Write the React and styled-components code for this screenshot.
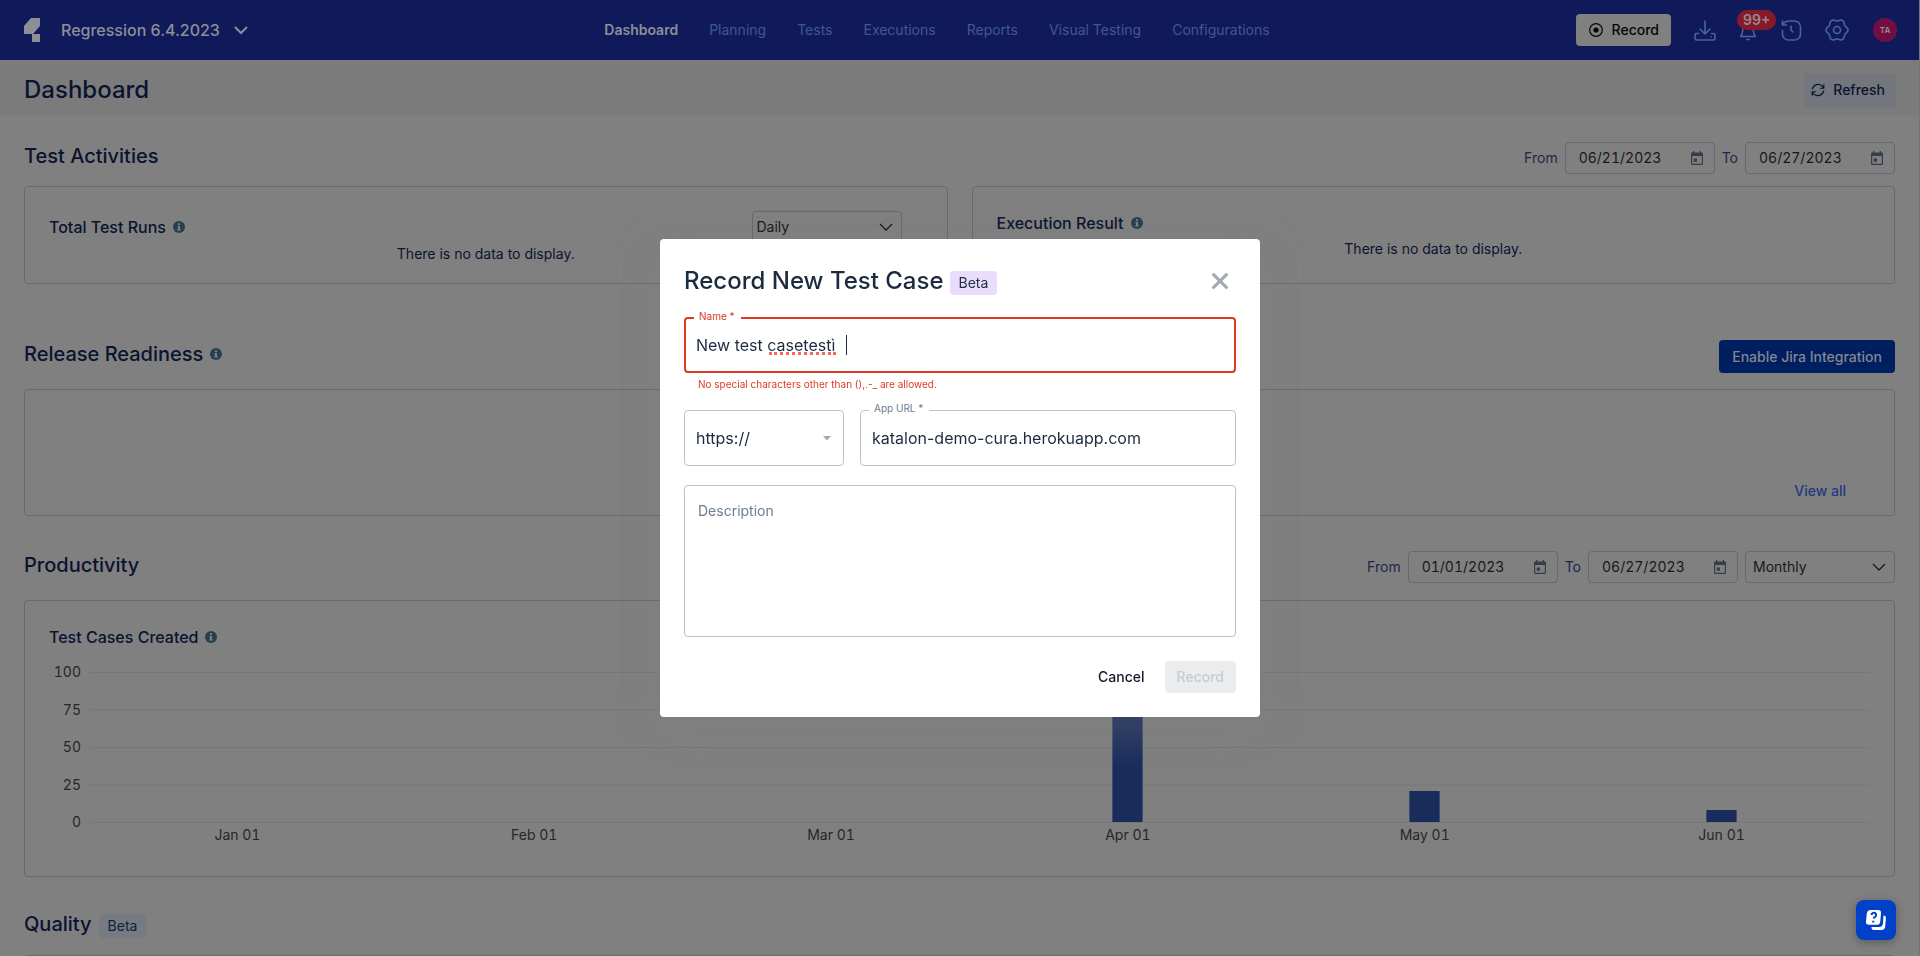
import React from "react";
import styled, { createGlobalStyle, css } from "styled-components";

const Global = createGlobalStyle`
  *, *::before, *::after { box-sizing: border-box; }
  html, body { margin: 0; height: 100%; }
  body {
    overflow: hidden;
    background: #808080;
    font-family: Inter, "Liberation Sans", sans-serif;
    font-size: 14px;
    line-height: 20px;
    color: #0a1330;
  }
  button, input, select, textarea { font: inherit; color: inherit; margin: 0; }
  h1, h2, h3, p { margin: 0; font-weight: 500; }
`;

const Page = styled.div`
  height: 100vh;
  overflow: hidden;
  border-right: 1px solid #72757a;
`;

const TopBar = styled.header`
  display: grid;
  grid-template-columns: 1fr auto 1fr;
  align-items: center;
  height: 60px;
  padding: 0 23px 0 24px;
  margin-right: -1px;
  background: #101a5b;
`;

const Project = styled.button`
  display: flex;
  align-items: center;
  justify-self: start;
  padding: 0;
  border: 0;
  background: none;
  color: #8e8f96;
  font-size: 16px;
  font-weight: 500;
`;

const ProjectName = styled.span`
  margin: 0 14px 0 20px;
`;

const Nav = styled.nav`
  display: flex;
  gap: 31px;
  margin-right: 47px;
`;

const NavLink = styled.a`
  color: ${(p) => (p.$active ? "#8e8f96" : "#40588a")};
  font-weight: ${(p) => (p.$active ? 600 : 400)};
  text-decoration: none;
`;

const Tools = styled.div`
  display: flex;
  align-items: center;
  justify-self: end;
  gap: 20px;
`;

const RecordButton = styled.button`
  display: flex;
  align-items: center;
  gap: 8px;
  height: 32px;
  margin-right: 2px;
  padding: 0 12px;
  border: 0;
  border-radius: 4px;
  background: #808080;
  color: #05060b;
  font-weight: 500;
`;

const IconButton = styled.button`
  position: relative;
  display: flex;
  padding: 0;
  border: 0;
  background: none;
  color: #47649c;
`;

const Count = styled.span`
  position: absolute;
  left: 0;
  top: -8px;
  padding: 0 6px;
  border-radius: 10px;
  background: #861a2b;
  color: #96898c;
  font-weight: 600;
`;

const Avatar = styled.span`
  display: grid;
  place-items: center;
  width: 24px;
  height: 24px;
  margin-left: 4px;
  border-radius: 50%;
  background: #720f42;
  color: #a08c98;
  font-size: 8px;
  font-weight: 600;
`;

const TitleBar = styled.div`
  display: flex;
  align-items: center;
  justify-content: space-between;
  height: 56px;
  padding: 4px 23px 0 24px;
  background: #7b7b7b;
`;

const PageTitle = styled.h1`
  font-size: 24px;
  line-height: 32px;
`;

const RefreshButton = styled.button`
  display: flex;
  align-items: center;
  gap: 8px;
  height: 35px;
  padding: 0 11px 0 7px;
  border: 0;
  border-radius: 4px;
  background: #74767d;
  font-weight: 500;
`;

const Main = styled.main`
  padding: 26px 24px 0;
`;

const SectionHead = styled.div`
  display: flex;
  align-items: flex-start;
  justify-content: space-between;
  height: 32px;
  margin: ${(p) => p.$top || 0}px 0 ${(p) => p.$bottom}px;
`;

const SectionTitle = styled.h2`
  display: flex;
  align-items: center;
  gap: 7px;
  height: 28px;
  font-size: 20px;
  line-height: 28px;
`;

const CardTitle = styled.h3`
  display: flex;
  align-items: center;
  gap: 7px;
  font-size: 16px;
  line-height: 24px;
`;

const Filters = styled.div`
  display: flex;
  align-items: center;
  gap: 7px;
  color: #1c2848;
`;

const FieldLabel = styled.label`
  display: flex;
  align-items: center;
  gap: 7px;
`;

const boxed = css`
  border: 1px solid #67696e;
  border-radius: 4px;
`;

const DateBox = styled.span`
  ${boxed}
  display: flex;
  align-items: center;
  justify-content: space-between;
  width: 150px;
  height: 32px;
  padding: 0 10px 0 13px;
  color: #16181c;
`;

const DateInput = styled.input`
  width: 100px;
  padding: 0;
  border: 0;
  background: none;
  outline: none;
  font-variant-numeric: tabular-nums;
`;

const SelectWrap = styled.span`
  ${boxed}
  display: flex;
  align-items: center;
  width: 150px;
  height: 32px;
  padding-right: 8px;
  color: #16181c;
`;

const Select = styled.select`
  flex: 1;
  min-width: 0;
  height: 100%;
  padding: 0 0 0 ${(p) => p.$inset}px;
  border: 0;
  background: none;
  outline: none;
  appearance: none;
`;

const Card = styled.section`
  ${boxed}
  flex: 1;
  min-height: ${(p) => p.$height}px;
  padding: 24px 24px 12px;
`;

const CardRow = styled.div`
  display: flex;
  gap: 24px;
`;

const CardHead = styled.div`
  display: flex;
  align-items: center;
  justify-content: space-between;
  height: ${(p) => p.$height}px;
  margin-bottom: ${(p) => p.$gap}px;
  padding-right: 21px;
`;

const Empty = styled.p`
  font-weight: 400;
  text-align: center;
`;

const PrimaryButton = styled.button`
  height: 33px;
  padding: 0 13px;
  border: 0;
  border-radius: 4px;
  background: #001f60;
  color: #84878d;
  font-weight: 500;
`;

const LinkRow = styled.div`
  display: flex;
  justify-content: flex-end;
  padding: 67px 24px 0;
`;

const TextLink = styled.a`
  color: #1f3a82;
  font-weight: 500;
  text-decoration: none;
`;

const Chart = styled.div`
  display: grid;
  grid-template-columns: 32px 1fr;
  grid-template-rows: 163px 20px;
  column-gap: 8px;
  margin-top: 13px;
  color: #262628;
  font-variant-numeric: tabular-nums;
`;

const Ticks = styled.div`
  display: flex;
  flex-direction: column;
  justify-content: space-between;
  height: 170px;
  text-align: right;
`;

const Plot = styled.div`
  display: grid;
  grid-template-columns: repeat(6, 1fr);
  align-items: end;
  justify-items: center;
  height: 151px;
  margin-top: 10px;
  border-bottom: 1px solid #777777;
  background: linear-gradient(to bottom, #777777 1px, transparent 1px) 0 0 / 100% 25%;
`;

const Bar = styled.div`
  width: 31px;
  border: solid #3d4c70;
  border-width: 0 1px;
  background: #192c5c;
`;

const Months = styled.div`
  grid-column: 2;
  display: grid;
  grid-template-columns: repeat(6, 1fr);
  text-align: center;
`;

const Tag = styled.span`
  margin-top: 4px;
  padding: 2px 9px;
  border-radius: 4px;
  background: ${(p) => (p.$violet ? "#eadcfd" : "#767b83")};
  color: ${(p) => (p.$violet ? "#233145" : "#101c3c")};
  font-size: 14px;
  font-weight: 400;
  line-height: 20px;
`;

const Overlay = styled.div`
  position: fixed;
  inset: 0;
  display: grid;
  place-items: center;
`;

const Dialog = styled.form`
  width: 600px;
  padding: 24px;
  border-radius: 4px;
  background: #ffffff;
  box-shadow: 0 24px 38px 3px rgba(130, 130, 130, 0.2), 0 9px 46px 8px rgba(130, 130, 130, 0.14);
  color: #1d2b3e;
`;

const DialogHead = styled.div`
  display: flex;
  align-items: center;
  justify-content: space-between;
  height: 36px;
  padding-right: 5px;
`;

const DialogTitle = styled.h2`
  display: flex;
  align-items: center;
  gap: 6px;
  font-size: 24px;
  line-height: 36px;
`;

const CloseButton = styled.button`
  display: flex;
  padding: 0;
  border: 0;
  background: none;
  color: #a5a8b5;
`;

const Field = styled.div`
  position: relative;
  display: flex;
  align-items: center;
  flex: ${(p) => p.$flex || "initial"};
  height: 56px;
  margin-top: ${(p) => p.$top || 0}px;
  padding: 0 ${(p) => (p.$error ? 10 : 11)}px;
  border: ${(p) => (p.$error ? "2px solid #dc3a24" : "1px solid #c2c3c6")};
  border-radius: 4px;
`;

const FloatingLabel = styled.label`
  position: absolute;
  top: -9px;
  left: 8px;
  padding: 0 6px 0 5px;
  background: #ffffff;
  color: ${(p) => (p.$error ? "#dc3a24" : "#6d7d8f")};
  font-size: 10px;
  line-height: 12px;
`;

const SpellingMark = styled.span`
  position: absolute;
  left: 83px;
  top: 33px;
  width: 67px;
  border-bottom: 3px dotted #ff6258;
`;

const Caret = styled.span`
  position: absolute;
  left: 160px;
  top: 16px;
  width: 1px;
  height: 20px;
  background: #1d2b3e;
`;

const TextInput = styled.input`
  flex: 1;
  min-width: 0;
  padding: 0;
  border: 0;
  outline: none;
  background: none;
  font-size: 16px;
  line-height: 24px;
`;

const ProtocolSelect = styled(Select)`
  font-size: 16px;
`;

const ErrorText = styled.p`
  margin: 5px 14px 0;
  color: #dc3a24;
  font-size: 10px;
  font-weight: 400;
  line-height: 12px;
`;

const UrlRow = styled.div`
  display: flex;
  gap: 16px;
  margin-top: 20px;
`;

const Description = styled.textarea`
  display: block;
  width: 100%;
  height: 152px;
  margin-top: 19px;
  padding: 15px 13px;
  border: 1px solid #c2c3c6;
  border-radius: 4px;
  outline: none;
  resize: none;
  &::placeholder { color: #6d7d8f; opacity: 1; }
`;

const Actions = styled.div`
  display: flex;
  justify-content: flex-end;
  gap: 8px;
  margin-top: 24px;
`;

const DialogButton = styled.button`
  height: 32px;
  padding: 0 12px;
  border: 0;
  border-radius: 4px;
  background: ${(p) => (p.disabled ? "#ebecee" : "none")};
  color: ${(p) => (p.disabled ? "#c7cad0" : "#14182c")};
  font-weight: 500;
`;

const HelpButton = styled.button`
  position: fixed;
  right: 24px;
  bottom: 16px;
  display: grid;
  place-items: center;
  width: 40px;
  height: 40px;
  padding: 0;
  border: 0;
  border-radius: 8px;
  background: #0041c8;
  box-shadow: 0 2px 10px rgba(0, 0, 0, 0.3);
`;

const Stroke = ({ size = 24, width = 2, children }) => (
  <svg width={size} height={size} viewBox="0 0 24 24" fill="none" stroke="currentColor" strokeWidth={width} strokeLinecap="round" strokeLinejoin="round" aria-hidden="true">
    {children}
  </svg>
);

const Logo = () => (
  <svg width="17" height="24" viewBox="0 0 17 24" fill="#8e8f96" aria-hidden="true">
    <path d="M7 0h9v8L9 16H0V8z" />
    <path d="M8 16h8v8H8z" />
  </svg>
);

const Chevron = ({ size = 14, width = 2 }) => (
  <svg width={size} height={size} viewBox="0 0 14 14" fill="none" stroke="currentColor" strokeWidth={width} aria-hidden="true">
    <path d="M1 4l6 6 6-6" />
  </svg>
);

const Info = () => (
  <svg width="12" height="12" viewBox="0 0 12 12" aria-hidden="true">
    <circle cx="6" cy="6" r="6" fill="#26404f" />
    <path d="M5 2.300h2v1.700H5zM4.500 5H7v3.300h.7v1.200H4.300V8.300H5V6.200h-.5z" fill="#808080" />
  </svg>
);

const Calendar = () => (
  <svg width="14" height="16" viewBox="0 0 14 16" fill="#353e4a" aria-hidden="true">
    <path fillRule="evenodd" d="M3 1h1.300v1.500h5.400V1H11v1.500h.7A1.300 1.300 0 0 1 13 3.800v9.900a1.300 1.300 0 0 1-1.300 1.300H2.300A1.300 1.300 0 0 1 1 13.700V3.800a1.300 1.300 0 0 1 1.300-1.300H3zM2.200 6v7.700h9.600V6z" />
    <path d="M3.700 8.500h3.300v3.300H3.700z" />
  </svg>
);

// Outline of a gear with six soft lobes
const GEAR = Array.from({ length: 72 }, (_, i) => {
  const a = (i * Math.PI) / 36;
  const r = 10 + Math.cos(6 * a);
  return `${(12 + r * Math.cos(a)).toFixed(2)},${(12 + r * Math.sin(a)).toFixed(2)}`;
}).join(" ");

const DateField = ({ label, value }) => (
  <FieldLabel>
    {label}
    <DateBox>
      <DateInput defaultValue={value} />
      <Calendar />
    </DateBox>
  </FieldLabel>
);

const NAV = ["Dashboard", "Planning", "Tests", "Executions", "Reports", "Visual Testing", "Configurations"];
const DATA = [
  { month: "Jan 01", count: 0 },
  { month: "Feb 01", count: 0 },
  { month: "Mar 01", count: 0 },
  { month: "Apr 01", count: 94 },
  { month: "May 01", count: 21 },
  { month: "Jun 01", count: 8 },
];

export default function App() {
  return (
    <>
      <Global />
      <Page>
        <TopBar>
          <Project>
            <Logo />
            <ProjectName>Regression 6.4.2023</ProjectName>
            <Chevron />
          </Project>
          <Nav>
            {NAV.map((name, i) => (
              <NavLink key={name} href="#" $active={i === 0}>{name}</NavLink>
            ))}
          </Nav>
          <Tools>
            <RecordButton>
              <Stroke size={16} width={1.8}>
                <circle cx="12" cy="12" r="9.500" />
                <circle cx="12" cy="12" r="3" fill="currentColor" />
              </Stroke>
              Record
            </RecordButton>
            <IconButton aria-label="Downloads">
              <Stroke width={1.6}>
                <path d="M12 3v13M7 11l5 5 5-5M5.500 15.500h-2A1.500 1.500 0 0 0 2 17v3.500A1.500 1.500 0 0 0 3.500 22h17a1.500 1.500 0 0 0 1.500-1.500V17a1.500 1.500 0 0 0-1.500-1.500h-2M18 18.800h.1" />
              </Stroke>
            </IconButton>
            <IconButton aria-label="Notifications">
              <Stroke width={1.6}>
                <path d="M3.500 18.500h15c-2-2-2.300-4-2.300-8a5.200 5.200 0 0 0-10.400 0c0 4-.3 6-2.300 8M10 21.500h2" />
              </Stroke>
              <Count>99+</Count>
            </IconButton>
            <IconButton aria-label="History">
              <Stroke width={1.6}>
                <path d="M1.500 3v4h4M1.500 7C3 4 5.500 3 8.500 3h5a6 6 0 0 1 6 6v7a6 6 0 0 1-6 6h-6a6 6 0 0 1-6-6v-3.500M10 8v4l2 2" />
              </Stroke>
            </IconButton>
            <IconButton aria-label="Settings">
              <Stroke width={1.6}>
                <circle cx="12" cy="12" r="3.500" />
                <polygon points={GEAR} />
              </Stroke>
            </IconButton>
            <Avatar>TA</Avatar>
          </Tools>
        </TopBar>

        <TitleBar>
          <PageTitle>Dashboard</PageTitle>
          <RefreshButton>
            <Stroke size={14}>
              <path d="M22 3v6h-6M2 21v-6h6M2.500 10A10 10 0 0 1 19 5l3 4M21.500 14A10 10 0 0 1 5 19l-3-4" />
            </Stroke>
            Refresh
          </RefreshButton>
        </TitleBar>

        <Main>
          <SectionHead $bottom={12}>
            <SectionTitle>Test Activities</SectionTitle>
            <Filters>
              <DateField label="From" value="06/21/2023" />
              <DateField label="To" value="06/27/2023" />
            </Filters>
          </SectionHead>
          <CardRow>
            <Card $height={98}>
              <CardHead $height={32} $gap={1}>
                <CardTitle>Total Test Runs <Info /></CardTitle>
                <SelectWrap>
                  <Select $inset={4} aria-label="Total test runs interval"><option>Daily</option></Select>
                  <Chevron width={1.3} />
                </SelectWrap>
              </CardHead>
              <Empty>There is no data to display.</Empty>
            </Card>
            <Card $height={98}>
              <CardHead $height={24} $gap={4}>
                <CardTitle>Execution Result <Info /></CardTitle>
              </CardHead>
              <Empty>There is no data to display.</Empty>
            </Card>
          </CardRow>

          <SectionHead $top={56} $bottom={17}>
            <SectionTitle>Release Readiness <Info /></SectionTitle>
            <PrimaryButton>Enable Jira Integration</PrimaryButton>
          </SectionHead>
          <Card $height={127}>
            <LinkRow><TextLink href="#">View all</TextLink></LinkRow>
          </Card>

          <SectionHead $top={35} $bottom={17}>
            <SectionTitle>Productivity</SectionTitle>
            <Filters>
              <DateField label="From" value="01/01/2023" />
              <DateField label="To" value="06/27/2023" />
              <SelectWrap>
                <Select $inset={7} aria-label="Productivity interval"><option>Monthly</option></Select>
                <Chevron width={1.3} />
              </SelectWrap>
            </Filters>
          </SectionHead>
          <Card $height={277}>
            <CardTitle>Test Cases Created <Info /></CardTitle>
            <Chart>
              <Ticks>
                {[100, 75, 50, 25, 0].map((t) => <span key={t}>{t}</span>)}
              </Ticks>
              <Plot>
                {DATA.map((d) => (
                  <Bar key={d.month} style={{ height: `${d.count}%` }} />
                ))}
              </Plot>
              <Months>
                {DATA.map((d) => <span key={d.month}>{d.month}</span>)}
              </Months>
            </Chart>
          </Card>

          <SectionHead $top={33} $bottom={13}>
            <SectionTitle>Quality <Tag>Beta</Tag></SectionTitle>
          </SectionHead>
          <Card $height={98} />
        </Main>
      </Page>

      <Overlay>
        <Dialog role="dialog" aria-labelledby="record-title">
          <DialogHead>
            <DialogTitle id="record-title">Record New Test Case <Tag $violet>Beta</Tag></DialogTitle>
            <CloseButton type="button" aria-label="Close">
              <Stroke size={22} width={3.5}><path d="M5 5l14 14M19 5L5 19" /></Stroke>
            </CloseButton>
          </DialogHead>
          <Field $top={18} $error>
            <FloatingLabel $error htmlFor="case-name">Name *</FloatingLabel>
            <TextInput id="case-name" defaultValue="New test casetestì " aria-invalid="true" aria-describedby="name-error" spellCheck={false} />
            <SpellingMark />
            <Caret />
          </Field>
          <ErrorText id="name-error">No special characters other than (),.-_ are allowed.</ErrorText>
          <UrlRow>
            <Field $flex="0 0 160px">
              <ProtocolSelect $inset={0} aria-label="Protocol"><option>https://</option></ProtocolSelect>
              <svg width="10" height="5" viewBox="0 0 10 5" fill="#a5a8b5" aria-hidden="true"><path d="M1 0h8L5 4.500z" /></svg>
            </Field>
            <Field $flex="1">
              <FloatingLabel htmlFor="app-url">App URL *</FloatingLabel>
              <TextInput id="app-url" defaultValue="katalon-demo-cura.herokuapp.com" />
            </Field>
          </UrlRow>
          <Description aria-label="Description" placeholder="Description" />
          <Actions>
            <DialogButton type="button">Cancel</DialogButton>
            <DialogButton type="submit" disabled>Record</DialogButton>
          </Actions>
        </Dialog>
      </Overlay>

      <HelpButton aria-label="Help">
        <svg width="22" height="22" viewBox="0 0 22 22" aria-hidden="true">
          <path d="M5.500 1H13a3 3 0 0 1 3 3.300l-.8 8.700a3 3 0 0 1-3 2.700H4a3 3 0 0 1-3-3.300l.8-8A4 4 0 0 1 5.500 1z" fill="#fff" />
          <path d="M18.500 6.500c1.500 0 2.500 1 2.400 2.500l-.7 8.500a4 4 0 0 1-4 3.500H9a2.500 2.500 0 0 1-2.500-2.500V18H14a4 4 0 0 0 4-3.700z" fill="#fff" />
          <path d="M6.500 6a2.300 2.300 0 1 1 3.600 1.900c-.9.500-1.400.9-1.500 1.800M8.300 11.700l-.1 1.800" fill="none" stroke="#0041c8" strokeWidth="2" />
        </svg>
      </HelpButton>
    </>
  );
}
